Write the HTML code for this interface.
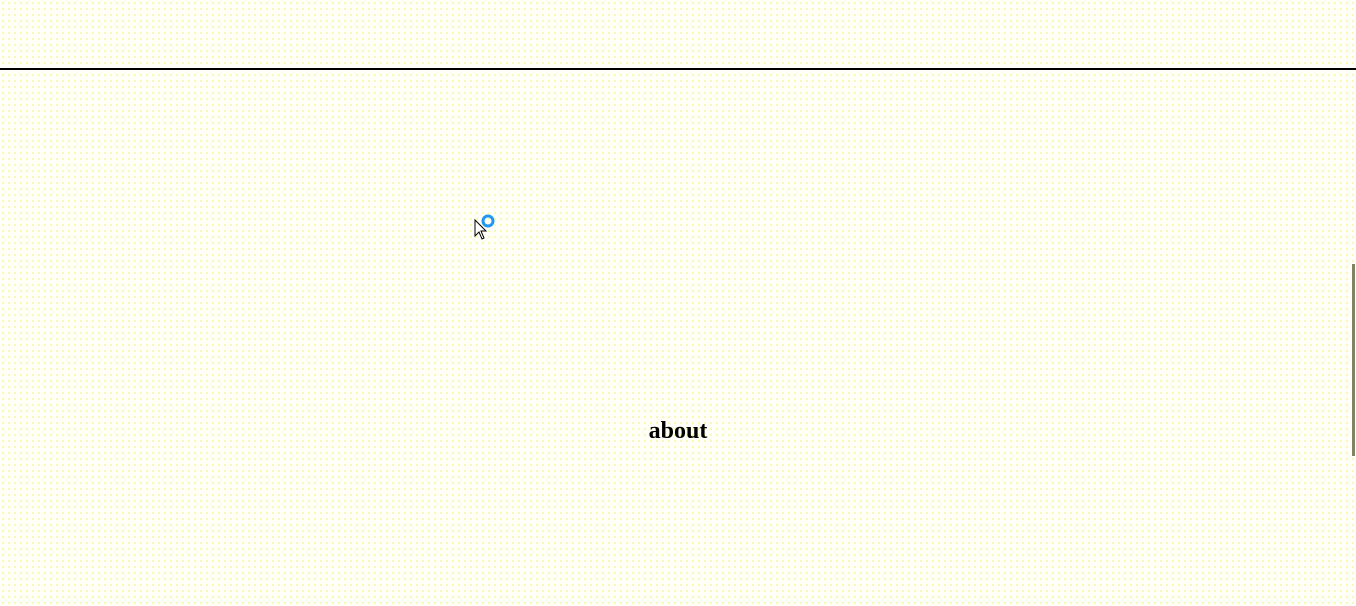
<!DOCTYPE html>
<html><head><style>
html,body{margin:0;padding:0;width:1356px;height:606px;overflow:hidden;}
body{background-color:#fffff8;
background-image:radial-gradient(circle,#f4f7a0 0.8px,transparent 1px),radial-gradient(circle,#d8d8f4 0.8px,transparent 1px);
background-size:6px 6px,12px 12px;background-position:0 0,3px 3px;position:relative;}
.line{position:absolute;left:0;top:68px;width:1356px;height:2px;background:#000;}
.about{position:absolute;left:0;width:1356px;top:418px;text-align:center;font:bold 24px "Liberation Serif",serif;color:#000;}
.sb{position:absolute;left:1352px;top:264px;width:3px;height:192px;background:#7f8466;}
</style></head><body>
<div class="line"></div>
<svg style="position:absolute;left:472px;top:212px" width="28" height="30">
<circle cx="16" cy="9" r="5" fill="none" stroke="#2196f3" stroke-width="3"/>
<path d="M3 8 L3 24 L7 20 L10 27 L12 26 L9 19 L14 19 Z" fill="#fff" stroke="#000" stroke-width="1"/>
</svg>
<div class="about">about</div>
<div class="sb"></div>
</body></html>
